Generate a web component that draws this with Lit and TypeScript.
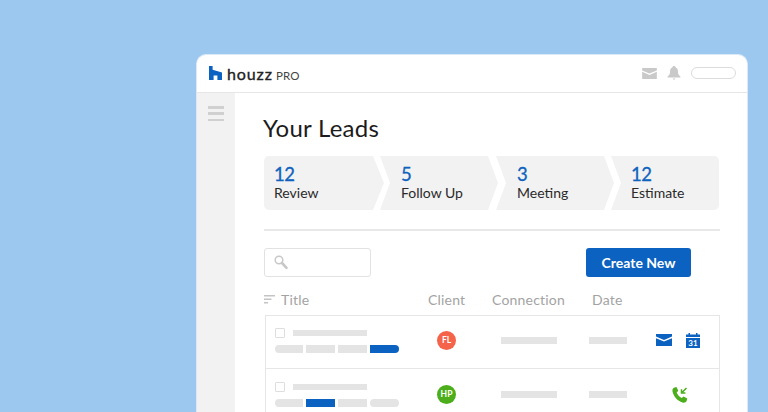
import { LitElement, html, css } from "lit";
import { customElement } from "lit/decorators.js";

const mail = (c: string, w: number, h: number) => html`<svg width=${w} height=${h} viewBox="0 0 16 12"><path fill=${c} d="M0 0H16V2.600L8 6 0 2.600Z"/><path fill=${c} d="M0 4.200 8 7.600 16 4.200V12H0Z"/></svg>`;

interface Lead { initials: string; tone: string; pills: string[]; }
const leads: Lead[] = [
  { initials: "FL", tone: "coral", pills: ["g", "sq", "sq", "blue-r"] },
  { initials: "HP", tone: "green", pills: ["g", "blue-sq", "sq", "g"] },
];
const steps = [["12", "Review"], ["5", "Follow Up"], ["3", "Meeting"], ["12", "Estimate"]];

@customElement("app-root")
export class AppRoot extends LitElement {
  static styles = css`
    :host { display: block; width: 768px; height: 412px; overflow: hidden; background: #9cc7ee; font-family: Lato, "Open Sans", sans-serif; color: #222; }
    .card { box-sizing: border-box; margin: 54px 0 0 196px; width: 552px; height: 370px; background: #fff; border: 1.5px solid #dbe9f6; border-bottom: 0; border-radius: 10px 10px 0 0; display: flex; flex-direction: column; }
    header { height: 37px; flex: none; display: flex; align-items: center; padding: 0 10px 0 12px; border-bottom: 1.5px solid #e6e6e6; }
    .logo { display: flex; align-items: center; margin-top: -1px; }
    .houzz { font-size: 16px; font-weight: 400; -webkit-text-stroke: .35px #222; letter-spacing: .9px; margin-left: 5px; color: #222; line-height: 1; position: relative; top: 1px; }
    .pro { font-size: 11.5px; letter-spacing: .2px; margin-left: 3px; color: #444; margin-top: 4px; }
    .tools { margin-left: auto; display: flex; align-items: center; margin-top: -1px; }
    .bell { margin-left: 10px; }
    .pill { width: 43px; height: 10px; border: 1.5px solid #dcdcdc; border-radius: 7px; margin-left: 10px; margin-right: 1px; }
    .body { flex: 1; display: flex; min-height: 0; }
    aside { width: 38px; flex: none; background: #f2f2f2; padding-top: 13px; box-sizing: border-box; }
    .burger { width: 16px; height: 2.5px; margin: 0 0 3.8px 11px; background: #d0d0d0; display: block; }
    main { flex: 1; padding-left: 28px; padding-right: 27px; min-width: 0; }
    h1 { margin: 22px 0 0; font-size: 24px; letter-spacing: .25px; line-height: 26px; font-weight: 400; color: #1c1c1c; height: 26px; }
    .steps { display: flex; margin: 15px 0 0 1px; height: 54px; }
    .step { background: #f2f2f2; height: 54px; display: flex; flex-direction: column; justify-content: center; box-sizing: border-box; }
    .step b { font-size: 18.5px; line-height: 20px; font-weight: 400; letter-spacing: -.6px; -webkit-text-stroke: .3px #0f62bd; color: #0f62bd; }
    .step span { font-size: 14px; line-height: 18px; color: #2a2a2a; }
    .s0 { width: 120px; padding-left: 10px; border-radius: 5px 0 0 5px; clip-path: polygon(0 0, 109px 0, 120px 50%, 109px 100%, 0 100%); }
    .s1 { width: 118px; margin-left: -4px; padding-left: 21px; clip-path: polygon(0 0, 108px 0, 118px 50%, 108px 100%, 0 100%, 10px 50%); }
    .s2 { width: 118px; margin-left: -2px; padding-left: 21px; clip-path: polygon(0 0, 108px 0, 118px 50%, 108px 100%, 0 100%, 10px 50%); }
    .s3 { width: 108px; margin-left: -3px; padding-left: 20px; border-radius: 0 5px 5px 0; clip-path: polygon(0 0, 108px 0, 108px 100%, 0 100%, 10px 50%); }
    hr { border: 0; height: 2px; background: #e8e8e8; margin: 18.5px 0 0 1px; }
    .bar { display: flex; align-items: center; justify-content: space-between; margin: 17px 29px 0 1px; }
    .search { box-sizing: border-box; width: 107px; height: 29px; border: 1.5px solid #e2e2e2; border-radius: 3px; display: flex; align-items: center; padding-left: 9px; }
    .create { width: 105px; height: 29px; box-sizing: border-box; background: #0b62c1; color: #fff; border: 0; border-radius: 3px; font: 700 14px Lato, sans-serif; padding: 0; }
    .cols { display: flex; align-items: center; height: 17px; margin: 14px 0 0 1px; font-size: 14px; color: #a3a3a3; }
    .cols span { display: block; letter-spacing: .2px; }
    .c-title { margin-left: 6px; width: 147px; }
    .c-client { width: 64px; }
    .c-conn { width: 100px; }
    .rows { display: block; margin: 7px 0 0 2px; border: 1.5px solid #e6e6e6; border-bottom: 0; }
    .row { display: flex; align-items: center; height: 53px; box-sizing: border-box; border-bottom: 1.5px solid #e6e6e6; padding: 0 0 3px 9px; }
    .row:last-child { padding-bottom: 1px; }
    .left { width: 162px; flex: none; }
    .l1 { display: flex; align-items: center; }
    .check { width: 8px; height: 8px; border: 1px solid #dedede; border-radius: 1px; flex: none; }
    .ttl { width: 74px; height: 6px; background: #e4e4e4; margin-left: 8px; }
    .l2 { display: flex; gap: 3px; margin-top: 7px; }
    .p { height: 8px; width: 29px; background: #e4e4e4; }
    .p:first-child { width: 28px; }
    .p.g { border-radius: 4px 0 0 4px; }
    .p.g:last-child { border-radius: 4px; }
    .p.blue-sq { background: #0b62c1; }
    .p.blue-r { background: #0b62c1; border-radius: 0 4px 4px 0; }
    .av { width: 19px; height: 19px; flex: none; border-radius: 50%; color: #fff; font-size: 8.5px; font-weight: 700; display: flex; align-items: center; justify-content: center; }
    .coral { background: #f4634a; }
    .green { background: #4cae1a; }
    .conn { width: 56px; height: 7px; background: #e4e4e4; margin-left: 45px; flex: none; }
    .date { width: 38px; height: 7px; background: #e4e4e4; margin-left: 32px; flex: none; }
    .act { display: flex; align-items: center; margin-left: 29px; gap: 14px; }
    .act.solo { margin-left: 45px; margin-top: 2px; }
  `;

  render() {
    return html`
      <div class="card">
        <header>
          <div class="logo">
            <svg width="13" height="14" viewBox="0 0 13 14"><path fill="#0b62c1" d="M0 0H3.600V3.800L13 6.400V14H8.400V9.600H4.600V14H0Z"/></svg>
            <span class="houzz">houzz</span><span class="pro">PRO</span>
          </div>
          <div class="tools">
            ${mail("#c9c9c9", 15, 11)}
            <svg class="bell" width="14" height="14" viewBox="0 0 14 14"><path fill="#c9c9c9" d="M7 0C8 0 8.600.6 8.700 1.500 10.600 2.200 11 3.800 11 6c0 2 .7 3.300 2.400 4.600V11.500H.6V10.600C2.300 9.300 3 8 3 6c0-2.200.4-3.800 2.300-4.500C5.400.6 6 0 7 0Z"/><path fill="#c9c9c9" d="M5.500 12.500H8.500L7 14Z"/></svg>
            <div class="pill"></div>
          </div>
        </header>
        <div class="body">
          <aside><i class="burger"></i><i class="burger"></i><i class="burger"></i></aside>
          <main>
            <h1>Your Leads</h1>
            <div class="steps">
              ${steps.map(([n, l], i) => html`<div class="step s${i}"><b>${n}</b><span>${l}</span></div>`)}
            </div>
            <hr />
            <div class="bar">
              <div class="search">
                <svg width="14" height="15" viewBox="0 0 14 15" fill="none"><circle cx="5" cy="5" r="3.800" stroke="#c8c8c8" stroke-width="1.500"/><path d="M8 8l4.500 4.800" stroke="#c8c8c8" stroke-width="2.600" stroke-linecap="round"/></svg>
              </div>
              <button class="create">Create New</button>
            </div>
            <div class="cols">
              <svg width="11" height="9" viewBox="0 0 11 9"><path fill="#c4c4c4" d="M0 0H11V1.400H0ZM0 3.500H7.500V4.900H0ZM0 7H4V8.400H0Z"/></svg>
              <span class="c-title">Title</span>
              <span class="c-client">Client</span>
              <span class="c-conn">Connection</span>
              <span>Date</span>
            </div>
            <div class="rows">
              ${leads.map((d, i) => html`
                <div class="row">
                  <div class="left">
                    <div class="l1"><div class="check"></div><div class="ttl"></div></div>
                    <div class="l2">${d.pills.map((p) => html`<div class="p ${p}"></div>`)}</div>
                  </div>
                  <div class="av ${d.tone}">${d.initials}</div>
                  <div class="conn"></div>
                  <div class="date"></div>
                  ${i === 0
                    ? html`<div class="act">${mail("#0b62c1", 16, 12)}
                        <svg width="14" height="15" viewBox="0 0 14 15"><path fill="#0b62c1" d="M0 1.500H2.500V0H4V1.500H10V0H11.500V1.500H14V4H0ZM0 5H14V15H0Z"/><text x="7" y="12.800" font-size="8" font-weight="700" text-anchor="middle" fill="#fff" font-family="Lato">31</text></svg></div>`
                    : html`<div class="act solo"><svg width="16" height="16" viewBox="0 0 16 16"><path fill="#4cae1a" d="M1.800.8 4.500 0 6.300 3.800 4.700 5.500C5.300 7.600 7.500 10 9.800 10.900L11.500 9.400 15.300 11.500 14.500 14.300C13.900 15.500 12 16 10.500 15.500 5.500 14 1.500 9.500.5 4.500.2 3 .7 1.500 1.800.8Z"/><path fill="none" stroke="#4cae1a" stroke-width="1.500" d="M14.500 1 9.800 5.700M9.500 2.200V6H13.400"/></svg></div>`}
                </div>`)}
            </div>
          </main>
        </div>
      </div>`;
  }
}
